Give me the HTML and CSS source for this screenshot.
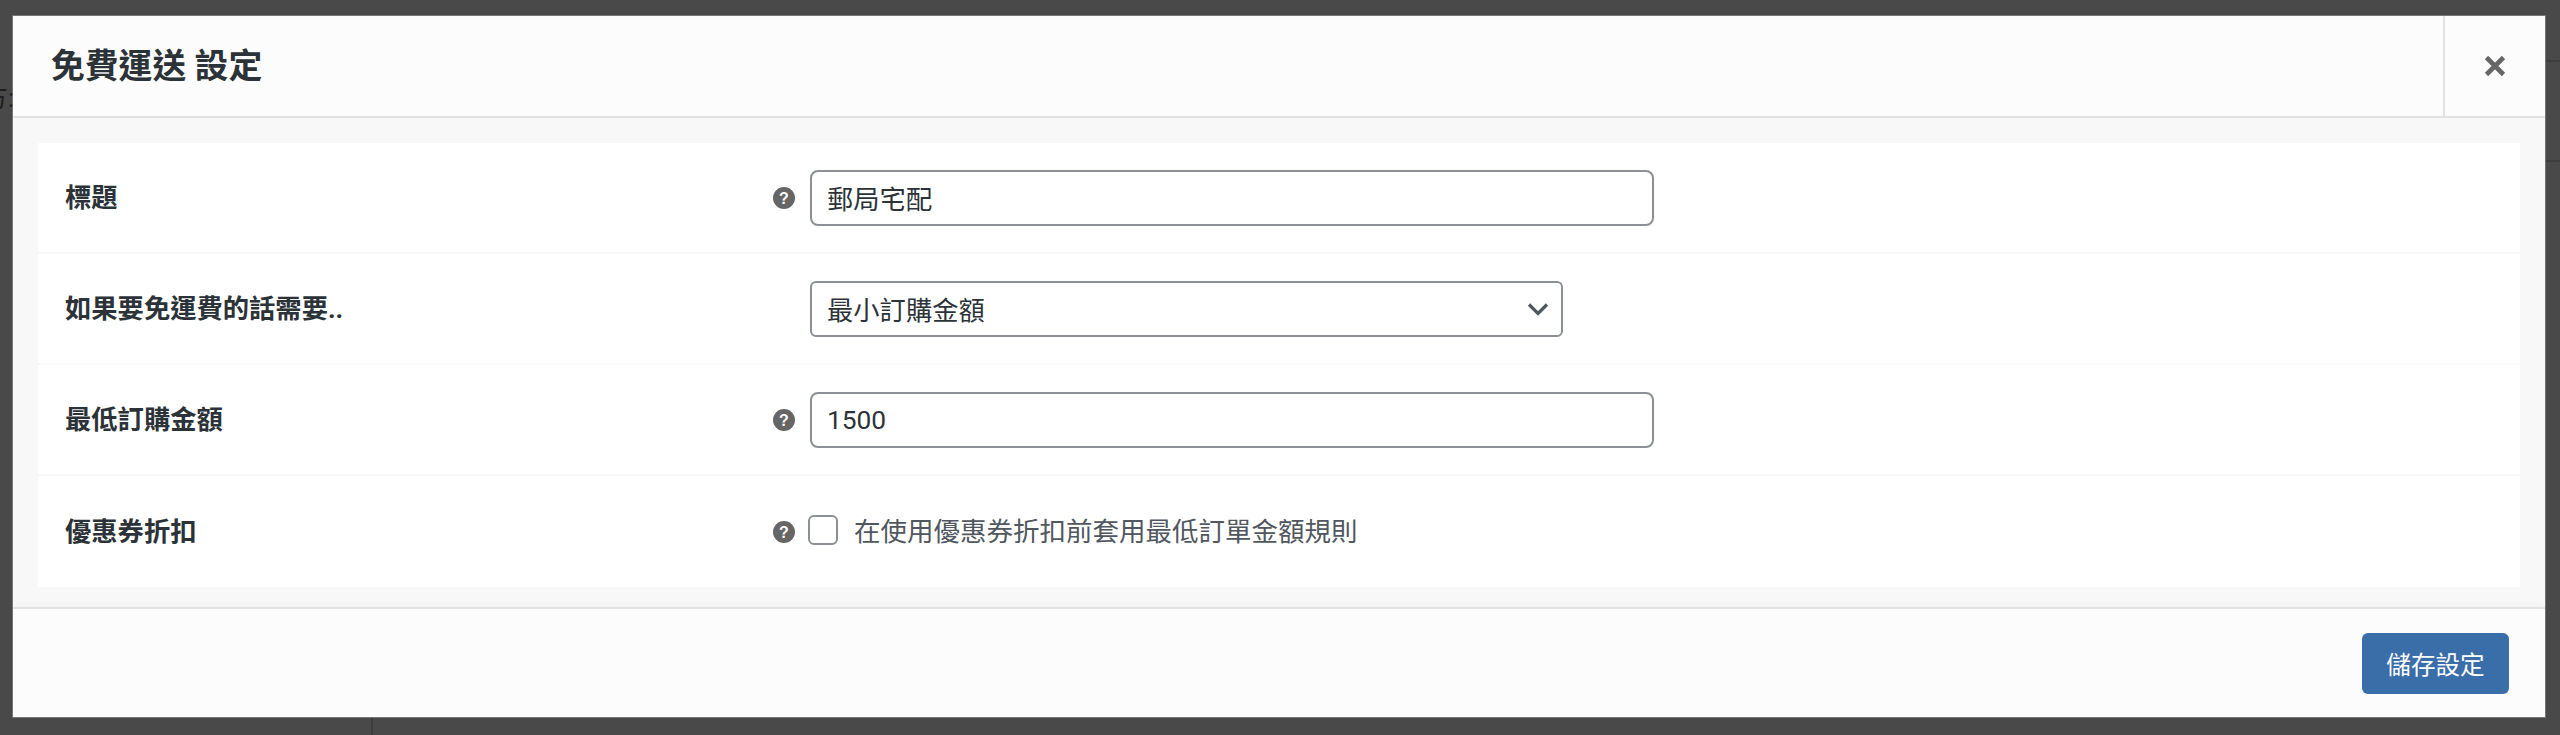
FILE: index.html
```html
<!DOCTYPE html>
<html lang="zh-Hant">
<head>
<meta charset="utf-8">
<title>免費運送 設定</title>
<link rel="stylesheet" href="styles.css">
</head>
<body>
<div class="backdrop">
  <span class="bg-text">方:</span>
  <i class="bg-line bg-line-a"></i>
  <i class="bg-line bg-line-b"></i>
  <i class="bg-line bg-line-c"></i>
  <section class="modal">
    <header class="modal-head">
      <h1 class="modal-title">免費運送 設定</h1>
      <button class="modal-close" type="button" aria-label="關閉">
        <svg width="22" height="22" viewBox="0 0 22 22"><path d="M2.5 2.5 19.5 19.5M19.5 2.5 2.5 19.5" fill="none" stroke="#666" stroke-width="4.6"/></svg>
      </button>
    </header>
    <div class="modal-body">
      <div class="form">
        <div class="row">
          <div class="label">標題</div>
          <svg class="help" viewBox="0 0 22 22"><circle cx="11" cy="11" r="11" fill="#666"/><text x="11" y="16.6" text-anchor="middle" class="help-mark">?</text></svg>
          <div class="field"><input class="input" type="text" value="郵局宅配"></div>
        </div>
        <div class="row">
          <div class="label">如果要免運費的話需要..</div>
          <span></span>
          <div class="field">
            <div class="select">最小訂購金額
              <svg class="chevron" width="22" height="14" viewBox="0 0 22 14"><path d="M2 2.5 11 11.5 20 2.5" fill="none" stroke="#50575e" stroke-width="3.2"/></svg>
            </div>
          </div>
        </div>
        <div class="row">
          <div class="label">最低訂購金額</div>
          <svg class="help" viewBox="0 0 22 22"><circle cx="11" cy="11" r="11" fill="#666"/><text x="11" y="16.6" text-anchor="middle" class="help-mark">?</text></svg>
          <div class="field"><input class="input" type="text" value="1500"></div>
        </div>
        <div class="row">
          <div class="label">優惠券折扣</div>
          <svg class="help" viewBox="0 0 22 22"><circle cx="11" cy="11" r="11" fill="#666"/><text x="11" y="16.6" text-anchor="middle" class="help-mark">?</text></svg>
          <label class="check"><span class="checkbox"></span>在使用優惠券折扣前套用最低訂單金額規則</label>
        </div>
      </div>
    </div>
    <footer class="modal-foot">
      <button class="save" type="button">儲存設定</button>
    </footer>
  </section>
</div>
</body>
</html>
```
FILE: styles.css
```css
* { box-sizing: border-box; }
html, body { margin: 0; height: 100%; }
body {
  font-family: Roboto, "Noto Sans CJK TC", sans-serif;
  color: #2c3338;
  overflow: hidden;
}
.backdrop {
  position: relative;
  height: 735px;
  padding: 16px 15px 18px 13px;
  background: #494949;
  overflow: hidden;
}
.bg-text {
  position: absolute;
  left: -18px;
  top: 80px;
  font-size: 26px;
  line-height: 36px;
  color: #1f1f1f;
}
.bg-line { position: absolute; background: #3e3e3e; }
.bg-line-a { left: 2545px; top: 60px; width: 15px; height: 2px; }
.bg-line-b { left: 2545px; top: 160px; width: 15px; height: 2px; }
.bg-line-c { left: 371px; top: 717px; width: 2px; height: 18px; }
.modal {
  position: relative;
  display: flex;
  flex-direction: column;
  height: 701px;
  background: #f8f8f8;
  box-shadow: 0 0 0 1px rgba(255,255,255,.25);
}
.modal-head {
  display: flex;
  align-items: stretch;
  justify-content: space-between;
  height: 102px;
  background: #fcfcfc;
  border-bottom: 2px solid #e2e2e2;
}
.modal-title {
  margin: 0;
  padding-left: 38px;
  font-size: 33.8px;
  line-height: 102px;
  font-weight: 700;
  color: #2c3338;
}
.modal-close {
  width: 102px;
  padding: 0;
  border: 0;
  border-left: 2px solid #e2e2e2;
  background: transparent;
  display: flex;
  align-items: center;
  justify-content: center;
}
.modal-body {
  flex: 1;
  padding: 25px 25px 0;
}
.form {
  height: 444px;
  background: #fff;
}
.row {
  display: grid;
  grid-template-columns: 735px 37px 1fr;
  align-items: center;
  height: 111px;
  border-bottom: 2px solid #f8f8f8;
}
.row:last-child { border-bottom: 0; }
.label {
  padding-left: 27px;
  font-size: 26.3px;
  line-height: 36px;
  font-weight: 700;
  color: #2c3338;
}
.help { width: 22px; height: 22px; display: block; }
.help-mark {
  font-family: "Liberation Sans", sans-serif;
  font-size: 16px;
  font-weight: 700;
  fill: #fff;
}
.field { display: flex; }
.input {
  display: block;
  width: 844px;
  height: 56px;
  padding: 0 15px;
  border: 2px solid #8c8f94;
  border-radius: 8px;
  background: #fff;
  font: 26.3px Roboto, "Noto Sans CJK TC", sans-serif;
  color: #2c3338;
}
.select {
  display: flex;
  align-items: center;
  justify-content: space-between;
  width: 753px;
  height: 56px;
  padding: 0 12px 0 15px;
  border: 2px solid #8c8f94;
  border-radius: 6px;
  background: #fff;
  font-size: 26.3px;
  color: #2c3338;
}
.check {
  display: flex;
  align-items: center;
  font-size: 26.5px;
  line-height: 36px;
  color: #50575e;
  margin-left: -2px;
}
.checkbox {
  flex: none;
  width: 30px;
  height: 30px;
  margin: -4px 16px 0 0;
  border: 2px solid #8c8f94;
  border-radius: 6px;
  background: #fff;
}
.modal-foot {
  display: flex;
  justify-content: flex-end;
  align-items: center;
  height: 110px;
  padding-right: 36px;
  background: #fcfcfc;
  border-top: 2px solid #e2e2e2;
  box-shadow: 0 -4px 6px rgba(0,0,0,.02);
}
.save {
  width: 147px;
  height: 61px;
  padding: 0;
  border: 0;
  border-radius: 6px;
  background: #3a6ea8;
  color: #fff;
  font: 24.6px Roboto, "Noto Sans CJK TC", sans-serif;
}
```
